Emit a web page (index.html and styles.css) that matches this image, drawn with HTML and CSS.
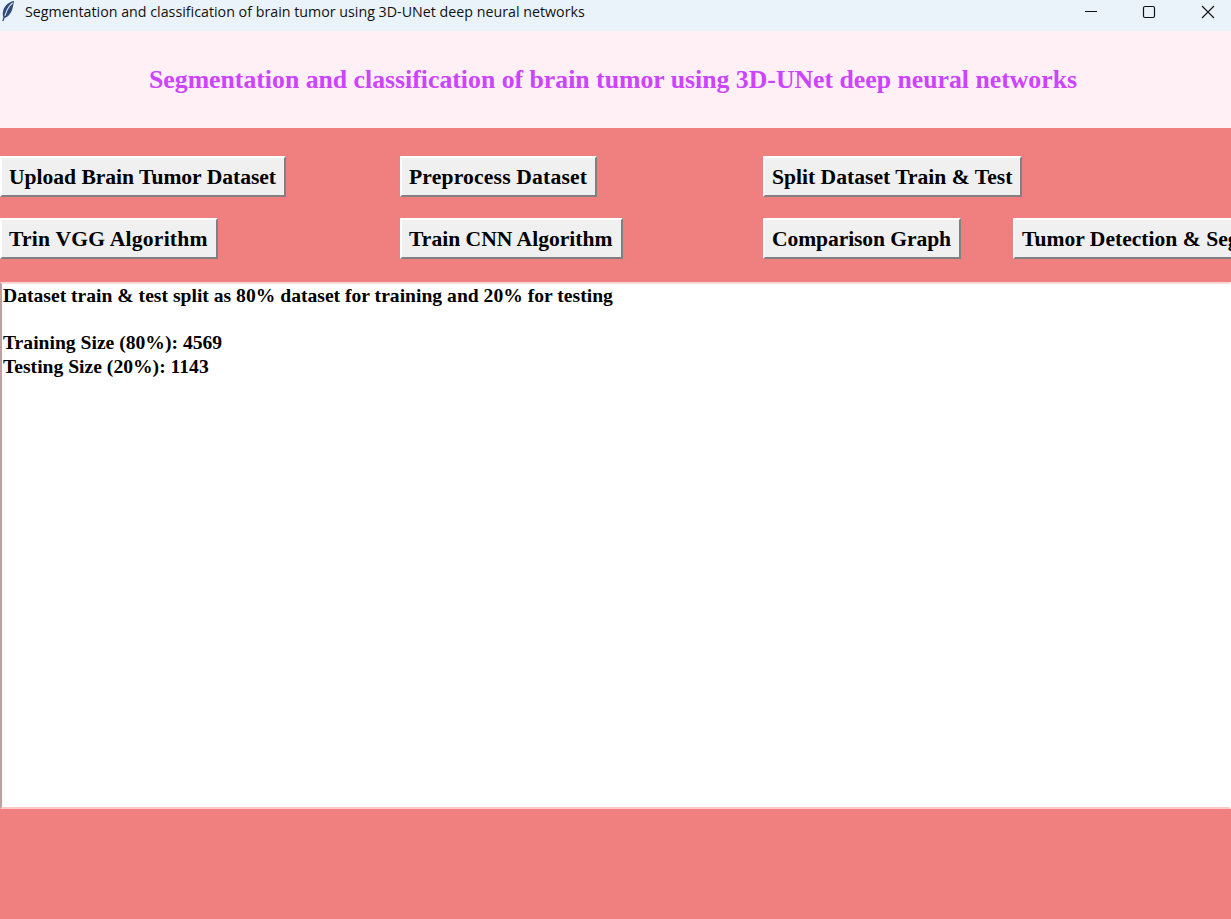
FILE: index.html
```html
<!DOCTYPE html>
<html lang="en">
<head>
<meta charset="utf-8">
<title>Segmentation and classification of brain tumor using 3D-UNet deep neural networks</title>
<link rel="stylesheet" href="styles.css">
</head>
<body>
<div class="window">
  <div class="titlebar">
    <svg class="app-icon" width="14" height="22" viewBox="0 0 14 22"><path d="M13 1C8.500 1.500 3.500 5.500 2.200 10.500c-.7 2.800-.5 5 .2 6.700L1.300 21l1.200.3 1.100-3.300c3.400-1 6.400-4.800 7.700-8.800C11.800 6.500 12.800 3.500 13 1z" fill="#2f4a78"/><path d="M11.800 2.800C8.500 5.500 5.800 9.500 3.900 15.800" stroke="#d5e0ee" stroke-width="1.100" fill="none"/></svg>
    <span class="title-text">Segmentation and classification of brain tumor using 3D-UNet deep neural networks</span>
    <div class="win-controls">
      <svg class="win-btn" width="58" height="24" viewBox="0 0 58 24"><path d="M28 11.500h12" stroke="#111" stroke-width="1"/></svg>
      <svg class="win-btn" width="58" height="24" viewBox="0 0 58 24"><rect x="28.500" y="6.500" width="11" height="11" rx="1.500" fill="none" stroke="#111" stroke-width="1.200"/></svg>
      <svg class="win-btn" width="58" height="24" viewBox="0 0 58 24"><path d="M29 6l12 12M41 6L29 18" stroke="#111" stroke-width="1.100"/></svg>
    </div>
  </div>
  <header class="banner"><h1>Segmentation and classification of brain tumor using 3D-UNet deep neural networks</h1></header>
  <main class="content">
    <div class="actions">
      <button class="tk-btn tight-1">Upload Brain Tumor Dataset</button>
      <button class="tk-btn loose-2">Preprocess Dataset</button>
      <button class="tk-btn">Split Dataset Train &amp; Test</button>
      <span></span>
      <button class="tk-btn loose-3">Trin VGG Algorithm</button>
      <button class="tk-btn">Train CNN Algorithm</button>
      <button class="tk-btn tight-2">Comparison Graph</button>
      <button class="tk-btn">Tumor Detection &amp; Segmentation</button>
    </div>
    <pre class="output">Dataset train &amp; test split as 80% dataset for training and 20% for testing

Training Size (80%): 4569
Testing Size (20%): 1143</pre>
  </main>
</div>
</body>
</html>
```
FILE: styles.css
```css
* { box-sizing: border-box; }
html, body { margin: 0; height: 100%; overflow: hidden; }
.window { width: 1231px; height: 919px; display: flex; flex-direction: column; overflow: hidden; background: #f08080; }
.titlebar { height: 31px; flex: none; background: #ebf3fa; display: flex; align-items: flex-start; padding-left: 1px; font: 14.25px/24px "Open Sans", "Noto Sans", sans-serif; color: #111; }
.app-icon { flex: none; margin-right: 10px; }
.title-text { white-space: nowrap; }
.win-controls { margin-left: auto; display: flex; }
.win-btn { display: block; }
.banner { height: 97px; flex: none; background: #fff0f5; display: flex; align-items: center; justify-content: center; padding: 1px 5px 0 0; }
.banner h1 { margin: 0; font: bold 25.75px "Liberation Serif", serif; color: #cc44ff; white-space: nowrap; }
.content { flex: 1; padding-top: 28px; min-height: 0; }
.actions { display: grid; grid-template-columns: 400px 363px 250px 300px; grid-auto-rows: 41px; row-gap: 21px; height: 104px; }
.tk-btn { justify-self: start; height: 41px; padding: 1px 8px 0 7px; white-space: nowrap; font: bold 21.6px "Liberation Serif", serif; color: #000; background: #f0f0f0; border: 2px solid; border-color: #fff #808080 #808080 #fff; border-radius: 0; }
.tight-2 { letter-spacing: -0.1px; }
.tight-1 { letter-spacing: -0.03px; }
.loose-2 { letter-spacing: 0.18px; }
.loose-3 { letter-spacing: 0.22px; }
.output { margin: 22px 0 0; width: 1231px; height: 527px; background: #fff; border: 2px solid; border-color: #f8d8d8 transparent #ffc8c8 #c0a0a0; padding: 0 1px; font: bold 19.62px/23.7px "Liberation Serif", serif; color: #000; overflow: hidden; }
```
